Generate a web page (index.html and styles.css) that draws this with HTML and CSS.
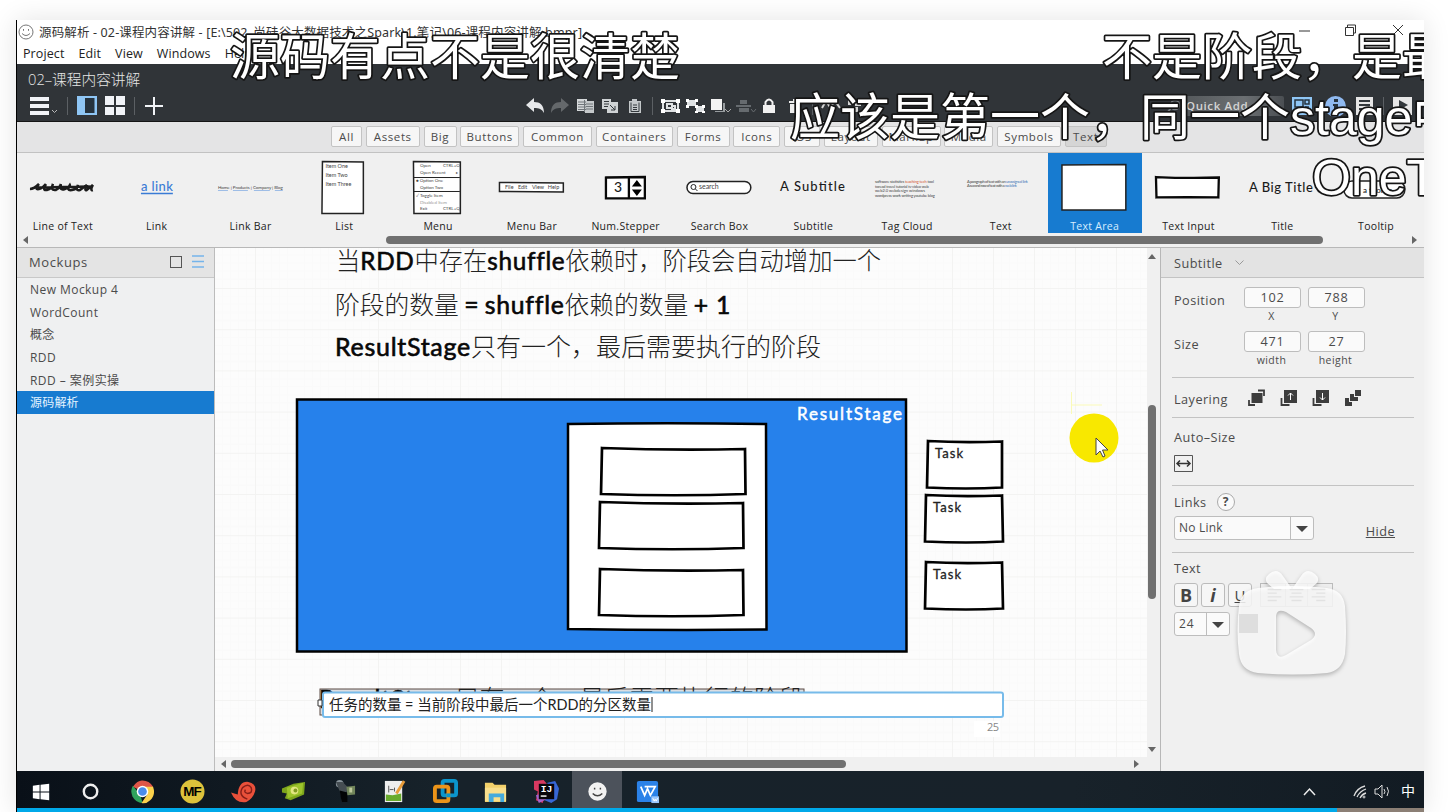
FILE: index.html
```html
<!DOCTYPE html>
<html lang="zh-CN">
<head>
<meta charset="utf-8">
<title>源码解析</title>
<link rel="stylesheet" href="styles.css">
</head>
<body>
<div class="player">
  <header class="titlebar">
    <div class="title-row">
      <svg class="smile" viewBox="0 0 16 16"><circle cx="8" cy="8" r="7"/><path d="M4 9.5q4 4 8 0M5.5 5v1.8M10.5 5v1.8"/></svg>
      <svg class="title-text" viewBox="39 20 560 23"><text x="39" y="37" textLength="543">源码解析 - 02-课程内容讲解 - [E:\502_尚硅谷大数据技术之Spark\1.笔记\06-课程内容讲解.bmpr]</text></svg>
      <svg class="win-buttons" viewBox="1290 20 130 23"><path d="M1299 31h11M1345.500 27.500h8v8h-8zM1347.500 27v-2h8v8h-2M1393 25l10 10M1403 25l-10 10"/></svg>
    </div>
    <nav class="menu"><span>Project</span><span>Edit</span><span>View</span><span>Windows</span><span>Help</span></nav>
  </header>

  <div class="dark">
    <div class="project">02–课程内容讲解</div>
    <div class="tools">
      <div class="left-tools">
        <svg width="28" height="20" viewBox="0 0 28 20"><path fill="#f1f3f7" d="M0 1h19v4H0zM0 8h19v4H0zM0 15h19v4H0z"/><path d="M22 14l2.500 2.500L27 14" fill="none" stroke="#bbb"/></svg>
        <i class="sep"></i>
        <svg width="20" height="20" viewBox="0 0 20 20"><path fill="#8fc6f5" d="M0 0h20v19H0z"/><path fill="#26333e" d="M8 2h9.500v15H8z"/></svg>
        <svg width="20" height="20" viewBox="0 0 20 20"><path fill="#f1f3f7" d="M0 0h9v9H0zM11 0h9v9h-9zM0 11h9v8H0zM11 11h9v8h-9z"/></svg>
        <i class="sep"></i>
        <svg width="20" height="20" viewBox="0 0 20 20"><path stroke="#f1f3f7" stroke-width="2" d="M10 1v18M1 10h18"/></svg>
      </div>
      <div class="mid-tools">
        <svg viewBox="0 0 25 18"><path fill="#e6e8ea" d="M3 8l8-7v4c6 0 10 3 10 11-2-4-5-5-10-5v4z"/></svg>
        <svg viewBox="0 0 25 18"><path fill="#64686b" d="M21 8l-8-7v4C7 5 3 8 3 16c2-4 5-5 10-5v4z"/></svg>
        <svg viewBox="0 0 25 18"><path fill="#d5d8da" d="M4 2h10v12H4z"/><path fill="#c5c9cb" d="M12 4h9v12h-9z"/><path stroke="#70767a" d="M5 5h8M5 7.500h8M5 10h8M5 12.500h8M13 7h7M13 9.500h7M13 12h7M11.500 3v12"/></svg>
        <svg viewBox="0 0 25 18"><path fill="#cfd3d5" d="M4 2h9v3h7v11H9v-4H4z"/><path stroke="#33383c" fill="none" d="M6 4.500h5M6 7h5M6 9.500h4M12 8l5 5M13 13h4V9"/></svg>
        <svg viewBox="0 0 25 18"><path fill="#c4c8ca" d="M6 4h3V2h5v2h4v12H6z"/><path stroke="#33383c" fill="none" d="M8 5.500v9h8v-9M10 8h4M10 10.500h4M10 12.500h4"/></svg>
        <i class="sep"></i>
        <svg viewBox="0 0 25 18"><path fill="none" stroke="#dfe2e4" stroke-width="2" d="M5 4h15v10H5zM9 7h5v4H9zM13 9h4v3h-4"/><path fill="#fff" d="M3 2h4v4H3zM18 2h4v4h-4zM3 12h4v4H3zM18 12h4v4h-4z"/></svg>
        <svg viewBox="0 0 25 18"><path fill="#dfe2e4" d="M4 3h9v6H4zM13 9h8v6h-8z"/><path fill="#fff" d="M3 2h3v3H3zM12 2h3v3h-3zM3 8h3v3H3zM12 8h3v3h-3zM19 8h3v3h-3zM12 14h3v2h-3zM19 14h3v2h-3z"/></svg>
        <svg viewBox="0 0 25 18"><path fill="#f3f3f3" d="M3 2h11v11H3z"/><path fill="#989da0" d="M15 6h2v9H7v-1h8z"/><path fill="none" stroke="#aaa" d="M17 12l3 3 3-3"/></svg>
        <svg viewBox="0 0 25 18"><path fill="#666b6f" d="M7 3h7v4H7zM3 8h15v2H3zM6 11h10v4H6z"/><path fill="none" stroke="#666b6f" d="M18 12l2.500 3 2.500-3"/></svg>
        <svg viewBox="0 0 25 18"><path fill="#f1f1f1" d="M5 8h12v8H5z"/><path fill="none" stroke="#f1f1f1" stroke-width="2" d="M7.500 8V5q3.500-5 7 0v3"/></svg>
        <svg viewBox="0 0 25 18"><path fill="#eee" d="M6 4h13v2H6zM7 7h11v9H7zM10 2h5v2h-5z"/></svg>
        <i class="sep"></i>
        <svg viewBox="0 0 25 18"><path fill="none" stroke="#d5d5d5" stroke-width="2" d="M4 11l4-7 4 6 5-6 5 7"/></svg>
        <svg viewBox="0 0 25 18"><path fill="#d5d5d5" d="M5 3h5v5H5zM12 4h6v5h-6zM9 10h6v5H9z"/></svg>
      </div>
      <div class="right-tools">
        <svg width="16" height="18" viewBox="0 0 16 18"><circle cx="9" cy="8" r="4.500" fill="none" stroke="#777c80" stroke-width="1.500"/><path d="M5 11l-4 5" stroke="#777c80" stroke-width="2"/></svg>
        <div class="quick">Quick Add</div>
        <svg width="20" height="20" viewBox="0 0 20 20"><path fill="#8fc6f5" d="M0 1h20v18H0z"/><path fill="none" stroke="#26333e" stroke-width="1.500" d="M3 4h8v7H3zM13 4h4v4h-4zM13 11h4M3 14h14"/></svg>
        <svg width="21" height="21" viewBox="0 0 21 21"><circle cx="10.500" cy="10.500" r="10.500" fill="#8fb9f0"/><path fill="#26333e" d="M9 3h4v3H9zM8 8h5v7h2v2H7v-2h2v-5H8z"/></svg>
        <svg width="18" height="20" viewBox="0 0 18 20"><path fill="#e6e6e6" d="M0 1h17v18H0z"/><path fill="none" stroke="#33383c" stroke-width="2" d="M3 5h11M3 9h11M3 13h7"/></svg>
        <i class="sep"></i>
        <svg width="19" height="20" viewBox="0 0 19 20"><path fill="#e6e6e6" d="M0 1h19v18H0z"/><path fill="#33383c" d="M6 4l9 5-9 5z"/></svg>
      </div>
    </div>
  </div>

  <div class="filters">
    <span>All</span><span>Assets</span><span>Big</span><span>Buttons</span><span>Common</span><span>Containers</span><span>Forms</span><span>Icons</span><span>iOS</span><span>Layout</span><span>Markup</span><span>Media</span><span>Symbols</span><span class="on">Text</span>
  </div>

  <div class="palette">
    <div class="items">
      <figure><svg viewBox="0 0 94 68"><path class="scribble" d="M14 36q4 0 9-5-5 6 0 5 4-1 7-5-4 7 1 6t6-6q-3 7 3 6 4-2 5-6-2 7 4 5t5-4q-4 6 2 5t6-5q-3 6 2 5l7-5q-3 6 0 5l6-5q-3 6 0 5M22 34.500l52-1"/></svg><figcaption>Line of Text</figcaption></figure>
      <figure><svg viewBox="0 0 94 68"><text x="31" y="38" class="hand link" font-size="13" textLength="32">a link</text><path d="M31 40.500h32" stroke="#3a7bd5" stroke-width="1.500"/></svg><figcaption>Link</figcaption></figure>
      <figure><svg viewBox="0 0 94 68"><text x="14" y="36" class="hand tiny" fill="#4a7fc4" font-size="4.500" textLength="65">Home | Products | Company | Blog</text><path d="M14 37.500h10M29 37.500h15M50 37.500h16M71 37.500h8" stroke="#9dbde6"/></svg><figcaption>Link Bar</figcaption></figure>
      <figure><svg viewBox="0 0 94 68"><path class="paper" d="M25.500 8.500l41 .5V60.500H25z"/><g class="hand tiny" font-size="5.500"><text x="28.500" y="15">Item One</text><text x="28.500" y="24">Item Two</text><text x="28.500" y="33">Item Three</text></g></svg><figcaption>List</figcaption></figure>
      <figure><svg viewBox="0 0 94 68"><path class="paper" d="M22.500 8.500l47 .5v51.500H23z"/><path d="M23 24.500h46M23 38.500h46" stroke="#222"/><g class="hand tiny" font-size="4.500"><text x="29" y="14">Open</text><text x="52" y="14">CTRL+O</text><text x="29" y="21">Open Recent</text><text x="65" y="21">▸</text><text x="25" y="29">● Option One</text><text x="29" y="36">Option Two</text><text x="25" y="44">✓ Toggle Item</text><text x="29" y="51" fill="#999">Disabled Item</text><text x="29" y="57">Exit</text><text x="52" y="57">CTRL+Q</text></g></svg><figcaption>Menu</figcaption></figure>
      <figure><svg viewBox="0 0 94 68"><path class="paper" d="M14.500 29.500l64 .5v9l-64-.5z"/><g class="hand tiny" font-size="5.500"><text x="20" y="36">File</text><text x="33" y="36">Edit</text><text x="47" y="36">View</text><text x="63" y="36">Help</text></g></svg><figcaption>Menu Bar</figcaption></figure>
      <figure><svg viewBox="0 0 94 68"><path class="paper thick" d="M27 24.500l39-.5V45.500H27zM50 24v22"/><text x="35" y="39.500" class="hand" font-size="14">3</text><path d="M58 27l5 6.500h-10zM58 43l-5-6.500h10z"/></svg><figcaption>Num.Stepper</figcaption></figure>
      <figure><svg viewBox="0 0 94 68"><rect class="paper" x="14" y="28.500" width="64" height="12" rx="6"/><circle cx="20.500" cy="34" r="2.500" fill="none" stroke="#222"/><path d="M22.500 36l2 2" stroke="#222"/><text x="26" y="36.500" class="hand tiny" font-size="7" fill="#888">search</text></svg><figcaption>Search Box</figcaption></figure>
      <figure><svg viewBox="0 0 94 68"><text x="14" y="38" class="hand" font-size="13" textLength="65">A Subtitle</text></svg><figcaption>Subtitle</figcaption></figure>
      <figure><svg viewBox="0 0 94 68"><g class="hand tiny" font-size="4"><text x="15" y="30" textLength="59">software statistics <tspan fill="#d4552d">teaching tech</tspan> tool</text><text x="15" y="35" textLength="54">toread travel tutorial tv video web</text><text x="15" y="39.500" textLength="50">web2.0 webdesign windows</text><text x="15" y="44" textLength="60">wordpress work writing youtube blog</text></g></svg><figcaption>Tag Cloud</figcaption></figure>
      <figure><svg viewBox="0 0 94 68"><g class="hand tiny" font-size="4"><text x="13" y="30" textLength="61">A paragraph of text with an <tspan fill="#477bb9">unassigned link</tspan></text><text x="13" y="34" textLength="50">A second row of text with a <tspan fill="#477bb9">web link</tspan></text></g></svg><figcaption>Text</figcaption></figure>
      <figure class="chosen"><svg viewBox="0 0 94 68"><path class="paper" d="M14 12l64-.5V57H14z"/></svg><figcaption>Text Area</figcaption></figure>
      <figure><svg viewBox="0 0 94 68"><path class="paper thick" d="M14 24q32 1.500 63 .5l-.5 20q-30-.5-62 0z"/></svg><figcaption>Text Input</figcaption></figure>
      <figure><svg viewBox="0 0 94 68"><text x="14" y="39" class="hand" font-size="13" textLength="64">A Big Title</text></svg><figcaption>Title</figcaption></figure>
      <figure><svg viewBox="0 0 94 68"><rect class="paper" x="15" y="28" width="61" height="17" rx="8"/><text x="34" y="40" class="hand" font-size="8">a tooltip</text></svg><figcaption>Tooltip</figcaption></figure>
    </div>
    <div class="hscroll top-scroll"><b class="tri-l"></b><i></i><b class="tri-r"></b></div>
  </div>

  <main class="work">
    <aside class="mockups">
      <div class="side-head"><span>Mockups</span><i class="square"></i><svg width="12" height="13" viewBox="0 0 12 13"><path stroke="#75b4ea" stroke-width="1.300" d="M0 1h12M0 6.500h12M0 12h12"/></svg></div>
      <ul><li>New Mockup 4</li><li>WordCount</li><li>概念</li><li>RDD</li><li>RDD – 案例实操</li><li class="current">源码解析</li></ul>
    </aside>

    <section class="stage">
      <svg class="canvas" viewBox="215 248 932 509">
        <defs><pattern id="grid" x="255" y="288" width="41" height="41.200" patternUnits="userSpaceOnUse"><path d="M8.500 0v41M16.500 0v41M24.500 0v41M32.500 0v41M0 8.500h41M0 16.500h41M0 24.500h41M0 32.500h41" stroke="#fafafa"/><path d="M.5 0v42M0 .5h41" stroke="#f3f3f2"/></pattern></defs>
        <rect x="215" y="248" width="932" height="509" fill="url(#grid)"/>
        <g class="note">
          <text x="336" y="270" textLength="545" lengthAdjust="spacingAndGlyphs">当<tspan>RDD</tspan>中存在<tspan>shuffle</tspan>依赖时，阶段会自动增加一个</text>
          <text x="335" y="314" textLength="396" lengthAdjust="spacingAndGlyphs">阶段的数量 <tspan>=</tspan> <tspan>shuffle</tspan>依赖的数量 <tspan>+ 1</tspan></text>
          <text x="335" y="356" textLength="486" lengthAdjust="spacingAndGlyphs"><tspan>ResultStage</tspan>只有一个，最后需要执行的阶段</text>
        </g>
        <path class="blue" d="M297 399.500q300-1 609 0l.5 252q-300-1-609.500 0z"/>
        <text class="stage-name" x="797" y="420" textLength="105">ResultStage</text>
        <path class="sketch thin" d="M568 424q100-1.500 198 0l.5 205.500q-100 1-198.500-.5z"/>
        <g class="sketch">
          <path d="M602 448q70 2.500 143 1l.5 45q-70 2.500-144.500 0z"/>
          <path d="M600 502q70 2.500 143 1l.5 45q-70 2.500-144.500 0z"/>
          <path d="M600 569q70 2.500 143 1l.5 45q-70 2.500-144.500 0z"/>
          <path d="M928 441q35 2 74 .5v46q-35 2-75 0z"/>
          <path d="M926 495q35 2 76 .5l1 46q-35 2-78 0z"/>
          <path d="M926 562q35 2 76 .5l1 46q-35 2-78 0z"/>
        </g>
        <g class="task"><text x="935" y="458" textLength="28">Task</text><text x="933" y="512" textLength="28">Task</text><text x="933" y="579" textLength="28">Task</text></g>
        <circle cx="1094" cy="438" r="24.500" fill="#f8e800"/>
        <path d="M1071.500 392v22M1072 405h30" stroke="#fafab8" fill="none"/>
        <path d="M1096 438v17l4-4 3 6 2-1-2.500-6h5.500z" fill="#fff" stroke="#444"/>
        <rect x="320" y="689" width="484" height="26" fill="#dbdde1" stroke="#5b4b45"/>
        <g class="note"><text x="319" y="708" textLength="485" lengthAdjust="spacingAndGlyphs"><tspan>ResultStage</tspan>只有一个，最后需要执行的阶段</text></g>
        <rect x="323" y="692.500" width="680" height="24.500" rx="2" fill="#fff" stroke="#77bbea" stroke-width="2"/>
        <path d="M318 700h4v6h-4z" fill="#fff" stroke="#333"/>
        <text class="edit" x="329" y="710" textLength="322" lengthAdjust="spacingAndGlyphs">任务的数量 = 当前阶段中最后一个RDD的分区数量</text>
        <path d="M652 697v15" stroke="#222"/>
        <path d="M974 721h26v16h-26z" fill="#fff"/>
        <text x="987" y="731" font-size="11" fill="#888" class="ui" textLength="12">25</text>
      </svg>
      <div class="vscroll"><b class="tri-u"></b><i></i><b class="tri-d"></b></div>
      <div class="hscroll bottom-scroll"><b class="tri-l"></b><i></i><b class="tri-r"></b></div>
    </section>

    <aside class="props">
      <div class="props-head">Subtitle<svg width="9" height="6" viewBox="0 0 9 6"><path d="M.5.5l4 4 4-4" fill="none" stroke="#999"/></svg></div>
      <div class="geometry">
        <label>Position</label><div><b>102</b><small>X</small></div><div><b>788</b><small>Y</small></div>
        <label>Size</label><div><b>471</b><small>width</small></div><div><b>27</b><small>height</small></div>
      </div>
      <div class="layering"><label>Layering</label>
        <svg viewBox="0 0 18 18"><path fill="#3d3d3d" d="M3.500 4h11v10h-11z"/><path d="M1 11v5h6M10 1.500h6V7" fill="none" stroke="#3d3d3d" stroke-width="1.800"/></svg>
        <svg viewBox="0 0 18 18"><path fill="#3d3d3d" d="M4 1h13v13H4z"/><path d="M1.500 9v7h8" fill="none" stroke="#3d3d3d" stroke-width="1.800"/><path d="M10.500 11V4M8 6.500L10.500 4 13 6.500" fill="none" stroke="#fff"/></svg>
        <svg viewBox="0 0 18 18"><path fill="#3d3d3d" d="M4 1h13v13H4z"/><path d="M1.500 9v7h8" fill="none" stroke="#3d3d3d" stroke-width="1.800"/><path d="M10.500 4v7M8 8.500l2.500 2.500L13 8.500" fill="none" stroke="#fff"/></svg>
        <svg viewBox="0 0 18 18"><path fill="#3d3d3d" d="M11 1h6v6h-6zM6 5h4v3h4v4H6zM1 9h4v4h3v4H1z"/></svg>
      </div>
      <div class="autosize"><label>Auto–Size</label><svg width="19" height="17" viewBox="0 0 19 17"><path fill="none" stroke="#555" d="M.5.5h18v16H.5z"/><path fill="none" stroke="#333" stroke-width="1.500" d="M3 8.500h13M6 5.500l-3 3 3 3M13 5.500l3 3-3 3"/></svg></div>
      <div class="links">
        <div class="links-title"><label>Links</label><em>?</em></div>
        <div class="links-row"><div class="combo"><span>No Link</span><b></b></div><u>Hide</u></div>
      </div>
      <div class="text-props">
        <label>Text</label>
        <div class="format"><button>B</button><button class="it">i</button><button class="un">U</button>
          <div class="align"><svg viewBox="0 0 73 24"><path d="M24.500 0v24M48.500 0v24" stroke="#bbb"/><path d="M5 6h15M5 10h10M5 14h15M5 18h10M29 6h15M31 10h11M29 14h15M31 18h11M53 6h15M58 10h10M53 14h15M58 18h10" stroke="#666" stroke-width="1.500"/></svg></div></div>
        <div class="size-row"><div class="combo small"><span>24</span><b></b></div><i class="swatch"></i></div>
      </div>
    </aside>
  </main>

  <footer class="taskbar">
    <div class="apps">
      <div><svg viewBox="0 0 26 26"><path fill="#fff" d="M4 7l7-1v7H4zM12 6l9-1v8h-9zM4 14h7v7l-7-1zM12 14h9v8l-9-1z"/></svg></div>
      <div><svg viewBox="0 0 26 26"><circle cx="12" cy="13" r="7" fill="none" stroke="#eee" stroke-width="2.500"/></svg></div>
      <div><svg viewBox="0 0 26 26"><path fill="#df5648" d="M3 8Q8 1 13 1.500 20 1.500 24 8l-11 5z"/><path fill="#2fa35c" d="M3 7l8 10 2 8Q6 25 2.500 18 0 12 3 7z"/><path fill="#fbd14b" d="M24 8q3 9-3 14-4 4-9 3l6-9-5-8z"/><circle cx="13" cy="13" r="6" fill="#fff"/><circle cx="13" cy="13" r="4.500" fill="#4b8cea"/></svg></div>
      <div><svg viewBox="0 0 26 26"><circle cx="13" cy="13" r="12.500" fill="#ddc23b"/><text x="13" y="18" text-anchor="middle" font-family="Liberation Sans" font-weight="700" font-size="14" textLength="19">MF</text></svg></div>
      <div><svg viewBox="0 0 26 26"><path fill="#e9503a" d="M0 14l7 2Q8 2 18 3q9 2 7 10-2 7-9 11-11 2-16-10z"/><path d="M17 21q-10-4-5-12 6-5 9 0 2 6-4 6-4-1-2-4" fill="none" stroke="#861e18" stroke-width="1.500"/></svg></div>
      <div><svg viewBox="0 0 26 26"><path fill="#7da51c" d="M1 10l12-5 12-2-1 13-14 6-6-2 2-5-5-1z"/><path fill="#9dc42c" d="M6 9l17-5-1 11-15 5z"/><circle cx="14" cy="12" r="4" fill="#e2e680"/><circle cx="15" cy="12" r="2" fill="#829b23"/></svg></div>
      <div><svg viewBox="0 0 26 26"><circle cx="8" cy="5" r="4" fill="#89949b"/><path fill="#454d52" d="M4 3h7l5 5-2 16h-4l-1-9z"/><path fill="#030405" d="M8 12l8 2v10h-6z"/><path fill="#71855a" d="M15 8l9-1v9l-8 1z"/><path d="M18 9h3v5h-3z" fill="#bec99c"/></svg></div>
      <div><svg viewBox="0 0 26 26"><path fill="#eee" d="M3 2h18v22H3z"/><path fill="#69ab2d" d="M4 16l7 1 9-2v8H4z"/><path fill="none" stroke="#555" d="M7 7v7M8 11h4M13 9v4"/><path stroke="#e89c39" stroke-width="3" d="M23 2l-8 13"/></svg></div>
      <div><svg viewBox="0 0 26 26"><rect x="10" y="2" width="14" height="15" rx="2" fill="none" stroke="#0b95cc" stroke-width="4"/><rect x="2" y="8" width="14" height="15" rx="2" fill="none" stroke="#ec9419" stroke-width="4"/><path d="M14 17h4" stroke="#0b95cc" stroke-width="4"/></svg></div>
      <div><svg viewBox="0 0 26 26"><path fill="#f2d06a" d="M2 4h8l2 2h12v18H2z"/><path fill="#f9df8c" d="M2 9h22v14H2z"/><path fill="#45aadc" d="M6 15h16v9h-4v-5h-7v5H6z"/></svg></div>
      <div><svg viewBox="0 0 26 26"><path fill="#d93961" d="M0 2l10-1 5 6-6 18-7-3 2-9-4-2z"/><path fill="#3867d6" d="M14 4l8-2 4 8-2 11-6 4-7-3z"/><path fill="#a463ca" d="M2 17l6-2 5 6-8 4z"/><path d="M5 5h16v16H5z" fill="#09060b"/><path d="M7 17h6v1.500H7z" fill="#fff"/><text x="7" y="13" fill="#fff" font-family="Liberation Mono" font-weight="700" font-size="10">IJ</text></svg></div>
      <div class="active"><svg viewBox="0 0 26 26"><circle cx="13" cy="13" r="9.500" fill="#f2f2f2"/><path d="M8 15q5 5 10 0M10 9v2M16 9v2" fill="none" stroke="#444" stroke-width="1.500"/></svg></div>
      <div><svg viewBox="0 0 26 26"><rect x="2" y="2" width="22" height="22" rx="2" fill="#2b82e8"/><path d="M6 8l4 9 3-7 3 7 5-9H10" fill="none" stroke="#fff" stroke-width="1.800"/><path fill="#9bc7fb" d="M17 18h8v7h-8z"/><path d="M18.500 20l1.500 3 1-2 1 2 1.500-3" stroke="#fff" fill="none"/></svg></div>
    </div>
    <svg class="tray" viewBox="1290 771 134 37"><path d="M1304 795l5.500-6 5.500 6" fill="none" stroke="#eee" stroke-width="1.500"/><g fill="none" stroke="#ddd"><path d="M1354 796q3-8 11-10M1357 797q3-6 9-8M1360 798q2-4 6-5" stroke-width="1.300"/><circle cx="1364" cy="797" r="1"/><path d="M1375 789h3l4-4v13l-4-4h-3zM1384 789q2 3 0 5M1387 787q3 4 0 9"/></g><text x="1401" y="796" fill="#fff" font-size="14" font-family="Noto Sans CJK SC">中</text></svg>
  </footer>
  <div class="progress"><i></i></div>

  <svg class="danmaku" viewBox="16 20 1408 792">
    <text x="230" y="74.500">源码有点不是很清楚</text>
    <text x="1102" y="74.500">不是阶段，是最后</text>
    <text x="790" y="134.500">应该是第一个，同一个<tspan>stage</tspan>中</text>
    <text x="1312" y="194.500"><tspan>OneToOne</tspan></text>
  </svg>
  <svg class="play" viewBox="0 0 120 120">
    <path d="M37 8q8-7 14 2l9 13H42L35 17q-3-5 2-9zM83 8q-8-7-14 2l-9 13h18l7-6q3-5-2-9z"/>
    <path fill-rule="evenodd" d="M26 22Q60 18 95 22q16 2 18 18 2 28 0 48-3 17-18 19-35 3-69 0Q9 105 7 88q-3-24 0-48 2-16 19-18zM44 50v34q1 10 10 5l25-15q8-6 0-12L54 46q-9-4-10 4z"/>
  </svg>
</div>
</body>
</html>
```

FILE: styles.css
```css
* { box-sizing: border-box; }
body { margin: 0; background: #fff; overflow: hidden; width: 1448px; height: 812px; padding: 20px 24px 0 16px; font: 13px "Open Sans", "Noto Sans CJK SC", sans-serif; color: #4b4b4b; }
svg { display: block; flex: none; }
.player { position: relative; height: 792px; border-left: 1px solid #000; box-shadow: 0 0 26px rgba(0,0,0,.11); background: #efeff0; overflow: visible; }

.titlebar { height: 44px; background: #fff; color: #222; }
.title-row { display: flex; height: 23px; align-items: center; }
.smile { width: 16px; height: 16px; margin-left: 1px; fill: none; stroke: #777; }
.title-text { width: 560px; height: 23px; margin-left: 5px; font: 12.5px "Noto Sans", "Noto Sans CJK SC", sans-serif; fill: #333; }
.win-buttons { width: 130px; height: 23px; margin-left: auto; margin-right: 4px; fill: none; stroke: #333; }
.menu { display: flex; gap: 14px; padding-left: 6px; line-height: 22px; font-size: 12.500px; letter-spacing: .1px; }

.dark { height: 58px; background: #303438; border-bottom: 1px solid #151515; color: #e6e6e6; }
.project { height: 30px; line-height: 30px; padding-left: 11px; font-size: 14.700px; font-weight: 300; }
.tools { display: flex; height: 24px; align-items: center; }
.left-tools { display: flex; align-items: center; width: 505.500px; padding-left: 13px; }
.left-tools svg + svg { margin-left: 8px; }
.sep { display: block; width: 1px; height: 18px; background: #5c6064; }
.left-tools .sep { margin: 0 9px; }
.mid-tools { display: flex; align-items: center; }
.mid-tools svg { width: 25px; height: 18px; }
.mid-tools .sep { margin: 0 5px 0 4px; }
.right-tools { display: flex; align-items: center; margin-left: auto; padding-right: 12px; }
.quick { width: 100px; height: 20px; line-height: 20px; margin: 0 8px 0 2px; padding-left: 2px; background: linear-gradient(90deg, #55595c, #6b6f72 60%, #4b4f53); color: #d4d4d4; letter-spacing: .6px; border-radius: 2px; font-weight: 600; font-size: 11.500px; white-space: nowrap; }
.right-tools svg + svg { margin-left: 13px; }
.right-tools svg:nth-of-type(4) { margin-left: 10px; }
.right-tools .sep { margin: 0 9px 0 9px; }

.filters { display: grid; grid-template-columns: 31px 54px 33px 59px 69px 77px 53px 47px 36px 54px 59px 49px 64px 42px; gap: 3.750px; height: 31px; padding: 4px 0 0 314px; background: #e4e4e5; border-bottom: 1px solid #c2c2c2; }
.filters span { height: 21px; line-height: 19px; text-align: center; background: #f6f6f6; border: 1px solid #c3c3c3; border-radius: 2px; font-size: 11.500px; letter-spacing: .6px; white-space: nowrap; }
.filters .on { background: #d5d5d5; }

.palette { height: 95px; border-bottom: 1px solid #b8b8b8; background: #f0f0f0; overflow: hidden; }
.items { display: grid; grid-template-columns: repeat(15, 93.800px); height: 80px; margin-left: -1px; }
figure { margin: 0; height: 80px; }
figure svg { width: 93.800px; height: 68px; }
figcaption { text-align: center; font-size: 10.500px; line-height: 15px; margin-top: -2px; font-weight: 500; color: #222; letter-spacing: .3px; }
.chosen { background: #177bd0; }
.chosen figcaption { color: #d6edff; }
.paper { fill: #fff; stroke: #222; stroke-width: 1.500; }
.thick { stroke: #080808; stroke-width: 2.300; }
.scribble { fill: none; stroke: #1c1c1c; stroke-width: 2.500; }
.hand { font-family: Lato, "Open Sans", sans-serif; font-weight: 500; stroke: currentColor; stroke-width: 0; fill: #1a1a1a; }
.hand.tiny { font-weight: 400; fill: #444; }
.hand.link { fill: #3a7bd5; }

.hscroll { display: flex; align-items: center; height: 14px; }
.hscroll i { height: 8px; border-radius: 4px; background: #707070; }
.tri-l, .tri-r { border: 4px solid transparent; }
.tri-l { border-right: 5px solid #666; border-left: 0; }
.tri-r { border-left: 5px solid #666; border-right: 0; }
.top-scroll { padding-left: 6px; }
.top-scroll i { width: 937px; margin: 0 89px 0 358px; }

.work { display: grid; grid-template-columns: 198px 946px 263px; height: 523px; }
.mockups { background: #eff0f1; border-right: 1px solid #bcbcbc; }
.side-head { display: flex; align-items: center; height: 30px; padding: 0 10px 2px 12px; background: #e4e4e4; border-bottom: 1px solid #c8c8c8; font-size: 13px; letter-spacing: .6px; }
.square { width: 12px; height: 12px; border: 1.500px solid #555; margin: 0 10px 0 auto; }
ul { list-style: none; margin: 0; padding: 0; }
li { height: 22.700px; line-height: 23px; padding-left: 13px; font-size: 12px; letter-spacing: .45px; }
li:nth-child(3), li:nth-child(6) { letter-spacing: .2px; }
.current { background: #177bd0; color: #e4f3ff; }

.stage { display: grid; grid-template: 509px 14px / 932px 14px; background: #f0f0f0; }
.canvas { width: 932px; height: 509px; background: #fcfcfc; }
.note { font: 300 24.500px "Noto Sans CJK SC", sans-serif; fill: #222; }
.note tspan { font-family: Lato, sans-serif; font-weight: 400; letter-spacing: .7px; fill: #080808; stroke: #080808; stroke-width: .6px; }
.blue { fill: #2681eb; stroke: #000; stroke-width: 2.500; }
.stage-name { fill: #fff; stroke: #fff; stroke-width: .5px; font: 400 17px Lato, sans-serif; }
.sketch { fill: #fff; stroke: #000; stroke-width: 2.700; }
.thin { stroke-width: 2.500; }
.task { font: 400 13px Lato, sans-serif; fill: #222; stroke: #222; stroke-width: .3px; }
.edit { font: 400 15px Lato, "Noto Sans CJK SC", sans-serif; fill: #222; }
.ui { font-family: "Open Sans", sans-serif; }
.vscroll { display: flex; flex-direction: column; align-items: center; padding: 6px 3px 5px 0; border-right: 1px solid #b7b7b7; }
.vscroll i { width: 8px; height: 194px; border-radius: 4px; background: #707070; margin: 146px 0 auto; }
.tri-u, .tri-d { border: 4px solid transparent; }
.tri-u { border-top: 0; border-bottom: 5px solid #666; }
.tri-d { border-bottom: 0; border-top: 5px solid #666; }
.bottom-scroll { grid-column: 1 / 3; padding-left: 6px; border-right: 1px solid #b7b7b7; }
.bottom-scroll i { width: 615px; margin: 0 288px 0 5px; }

.props { background: #f0f0f0; font-size: 12.700px; letter-spacing: .45px; }
.props-head { display: flex; gap: 12px; align-items: center; height: 30px; padding-left: 13px; background: #e3e3e3; border-bottom: 1px solid #c3c3c3; }
.geometry { display: grid; grid-template-columns: 71px 64px 64px; grid-auto-rows: 43.500px; height: 100px; margin: 0 10px 0 11px; padding-top: 9px; border-bottom: 1px solid #c3c3c3; }
label { padding-left: 2px; }
.geometry label { line-height: 26px; }
.geometry b { display: block; width: 57px; height: 21px; line-height: 19px; margin-left: 1px; border: 1px solid #bdbdbd; border-radius: 3px; background: #fafafa; font-weight: 400; text-align: center; letter-spacing: .8px; }
.geometry small { display: block; width: 57px; text-align: center; font-size: 10.500px; line-height: 17px; }
.layering { display: flex; align-items: center; height: 40px; margin: 0 10px 0 11px; border-bottom: 1px solid #c3c3c3; }
.layering label { width: 76px; padding-top: 3px; }
.layering svg { width: 18px; height: 18px; margin-right: 14px; }
.autosize { height: 68px; margin: 0 10px 0 11px; border-bottom: 1px solid #c3c3c3; padding-top: 10px; }
.autosize label, .text-props label { display: block; line-height: 19px; }
.autosize svg { margin: 8px 0 0 2px; }
.links { height: 67px; margin: 0 10px 0 11px; border-bottom: 1px solid #c3c3c3; padding-top: 6px; }
.links-title { display: flex; align-items: center; height: 20px; }
.links em { width: 18px; height: 18px; margin-left: 10px; border: 1px solid #aaa; border-radius: 9px; background: #fafafa; text-align: center; line-height: 16px; font-style: normal; font-weight: 700; font-size: 12px; letter-spacing: 0; }
.links-row { display: flex; justify-content: space-between; padding: 4px 19px 0 2px; }
.links u { padding-top: 6px; line-height: 18px; }
.combo { display: flex; width: 140px; height: 24px; line-height: 22px; border: 1px solid #bdbdbd; border-radius: 3px; background: #fafafa; font-size: 12px; letter-spacing: .2px; }
.combo span { flex: 1; padding-left: 4px; border-right: 1px solid #bdbdbd; }
.combo b { margin: 9px 5px 0; height: 0; border: 6px solid transparent; border-top-color: #444; border-bottom: 0; }
.text-props { margin: 0 10px 0 11px; padding-top: 6px; }
.format { display: flex; gap: 3px; padding: 5px 0 0 2px; }
.format button { width: 24px; height: 24px; padding: 0; border: 1px solid #bbb; border-radius: 3px; background: #f6f6f6; color: #444; font: bold 18px/20px "Open Sans", sans-serif; }
.format .it { font-style: italic; }
.format .un { text-decoration: underline; font-size: 15px; font-weight: 400; }
.align { width: 73px; height: 24px; margin-left: 5px; background: #eee; border: 1px solid #bbb; }
.align svg { width: 71px; height: 22px; }
.size-row { display: flex; gap: 9px; padding: 5px 0 0 2px; }
.small { width: 56px; letter-spacing: .8px; }
.swatch { width: 19px; height: 19px; margin-top: 2px; background: #444; }

.taskbar { display: flex; height: 37px; background: linear-gradient(90deg, #091018, #17222a 30%, #18222a 75%, #121b23); }
.apps { display: grid; grid-template-columns: repeat(13, 50.550px); margin-left: -1px; }
.apps div { display: grid; place-items: center; padding-top: 3px; width: 50px; }
.apps .active { background: #4c525b; }
.apps svg { width: 25px; height: 25px; }
.tray { width: 134px; height: 37px; margin-left: auto; }
.progress { height: 4px; background: #8b7f75; }
.progress i { display: block; width: 1320px; height: 4px; background: #00a9e9; }

/* Comments and player controls float over the video frame. */
.danmaku { position: absolute; left: -1px; top: 0; width: 1408px; height: 792px; overflow: hidden; font: 400 50px "Noto Sans CJK SC", sans-serif; fill: #fff; stroke: #151515; stroke-width: 3.500px; paint-order: stroke; stroke-linejoin: round; }
.danmaku tspan { font-family: "Liberation Sans", sans-serif; }
.play { position: absolute; left: 1215px; top: 546px; width: 120px; height: 120px; fill: #fff; fill-opacity: .84; filter: drop-shadow(0 2px 2px rgba(0,0,0,.3)); }
```
